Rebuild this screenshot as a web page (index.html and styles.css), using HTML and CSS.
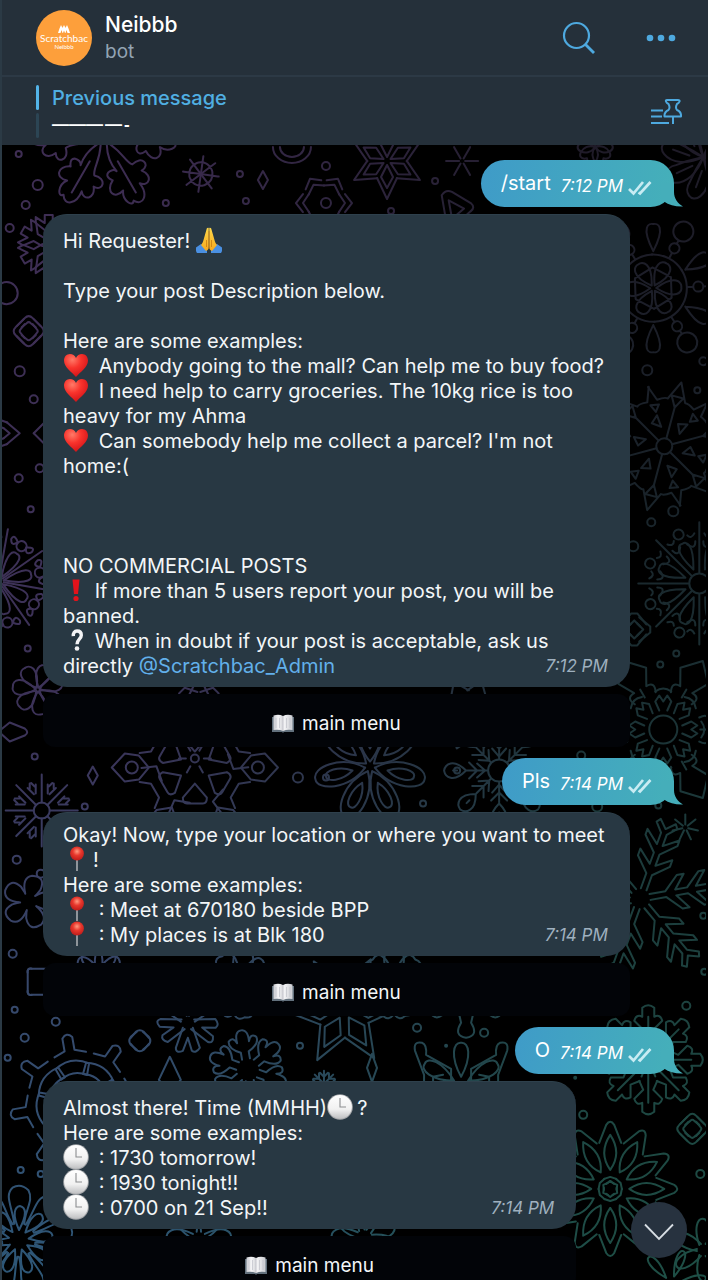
FILE: index.html
```
<!DOCTYPE html>
<html lang="en">
<head>
<meta charset="utf-8">
<meta name="viewport" content="width=device-width, initial-scale=1">
<title>Neibbb</title>
<link rel="stylesheet" href="styles.css">
</head>
<body>
<svg class="sprite" aria-hidden="true">
  <defs>
    <linearGradient id="handFill" x1="0" y1="0" x2="0" y2="1"><stop offset="0" stop-color="#ffd84a"/><stop offset="1" stop-color="#f6a81c"/></linearGradient>
    <radialGradient id="heartFill" cx=".35" cy=".25" r=".8"><stop offset="0" stop-color="#ff7a68"/><stop offset=".45" stop-color="#f8332c"/><stop offset="1" stop-color="#cf1117"/></radialGradient>
    <radialGradient id="pinFill" cx=".5" cy=".35" r=".6"><stop offset="0" stop-color="#ff9a80"/><stop offset=".5" stop-color="#e8372c"/><stop offset="1" stop-color="#c3201d"/></radialGradient>
    <linearGradient id="clockFill" x1="0" y1="0" x2="0" y2="1"><stop offset="0" stop-color="#ffffff"/><stop offset=".6" stop-color="#f1f1f1"/><stop offset="1" stop-color="#bfc0c2"/></linearGradient>
    <linearGradient id="pageFill" x1="0" y1="0" x2="1" y2="0"><stop offset="0" stop-color="#c9cbd0"/><stop offset=".25" stop-color="#f5f5f7"/><stop offset=".48" stop-color="#d7d8dc"/><stop offset=".55" stop-color="#f5f5f7"/><stop offset="1" stop-color="#c9cbd0"/></linearGradient>
  </defs>
  <symbol id="hands" viewBox="0 0 26 26">
    <path d="M0 20.500 5 17 11 22v4H1q-1.500-2-1-5.500zM26 20.500 21 17 15 22v4h10q1.500-2 1-5.500z" fill="#4a90e2"/>
    <path d="M12.700 1c-1.200-.7-2 .3-2.200 1.600L7.500 13c-.4 2-1 3-2.500 5l5 6c2-1 2.700-2 2.700-4zM13.300 1c1.200-.7 2 .3 2.200 1.600l3 10.400c.4 2 1 3 2.500 5l-5 6c-2-1-2.700-2-2.700-4z" fill="url(#handFill)"/>
    <path d="M13 4v18M10.500 13v7M15.500 13v7" stroke="#c97b12" stroke-width=".8" fill="none"/>
  </symbol>
  <symbol id="heart" viewBox="0 0 26 26">
    <path d="M13 25C9 20 1 15.500 1 8.500 1 4.800 3.600 2 7 2c2.700 0 4.900 1.400 6 4 1.100-2.600 3.300-4 6-4 3.400 0 6 2.800 6 6.500C25 15.500 17 20 13 25z" fill="url(#heartFill)"/>
  </symbol>
  <symbol id="bang" viewBox="0 0 26 26">
    <path d="M9.500 2.500h7L15 17h-4z" fill="#e3131b"/><circle cx="13" cy="21.500" r="2.600" fill="#e3131b"/>
  </symbol>
  <symbol id="question" viewBox="0 0 26 26">
    <path d="M10.300 9.200C10 6 11.500 4 14 4c2.600 0 4.300 1.600 4.300 4.200 0 3.800-4.300 4.300-4.300 9" fill="none" stroke="#f3f3f5" stroke-width="3.400"/><circle cx="14" cy="21.500" r="2.300" fill="#f3f3f5"/>
  </symbol>
  <symbol id="pin" viewBox="0 0 26 26">
    <path d="M14 13v12" stroke="#a9adb2" stroke-width="1.600"/><circle cx="14" cy="7.500" r="6.900" fill="url(#pinFill)"/>
  </symbol>
  <symbol id="clock" viewBox="0 0 26 26">
    <circle cx="13" cy="13" r="12.800" fill="#a5a7aa"/><circle cx="13" cy="12.800" r="11.900" fill="url(#clockFill)"/>
    <path d="M13 4v9h6" fill="none" stroke="#8b8d90" stroke-width="1.100"/>
  </symbol>
  <symbol id="book" viewBox="0 0 22 20">
    <path d="M0 3h22v15H12q-1 1.500-2 0H0z" fill="#63717d"/>
    <path d="M1.500 1.500Q7 0 11 2q4-2 9.500-.5V16Q15 15 11 17q-4-2-9.500-1z" fill="url(#pageFill)"/>
    <path d="M11 2v15M4 4v10M7.500 4v10M14.500 4v10M18 4v10" stroke="#b9bbc2" stroke-width=".6"/>
  </symbol>
  <symbol id="ticks" viewBox="0 0 24 16">
    <path d="M1 9 5.500 13.500 15 2M10.500 12.500 12 13.500 22.500 2" fill="none" stroke="currentColor" stroke-width="2.700"/>
  </symbol>
  <symbol id="tail" viewBox="0 0 22 24">
    <path d="M13 0v9c0 7 4 11.500 9 14.500-8 .2-14-1.500-19-5L0 14V0z" fill="currentColor"/>
  </symbol>
</svg>

<div class="app">
  <header class="topbar">
    <div class="avatar" aria-hidden="true">
      <svg class="avatar-mark" viewBox="0 0 12 8"><path d="M0 8 1.500 3.500 3 0l1.500 3L5.500 0 6 2.500 6.500 0l1 3L9 0l1.500 3.500L12 8H9.500L8.500 5l-1 3H7L6 5.500 5 8h-.5l-1-3-1 3z" fill="#fff"/></svg>
      <span class="avatar-name">Scratchbac</span>
      <span class="avatar-sub">Neibbb</span>
    </div>
    <div class="peer">
      <h1 class="peer-name">Neibbb</h1>
      <p class="peer-status">bot</p>
    </div>
    <button class="icon-button" aria-label="Search">
      <svg width="34" height="34" viewBox="0 0 34 34" fill="none" stroke="currentColor" stroke-width="2.200"><circle cx="14.500" cy="14.500" r="12.500"/><path d="M23.500 23.500 32 32" stroke-width="2.800"/></svg>
    </button>
    <button class="icon-button" aria-label="More">
      <svg width="30" height="8" viewBox="0 0 30 8" fill="currentColor"><circle cx="4" cy="4" r="3.300"/><circle cx="15" cy="4" r="3.300"/><circle cx="26" cy="4" r="3.300"/></svg>
    </button>
  </header>

  <section class="pinned" aria-label="Pinned messages">
    <div class="pinned-marks"><i class="mark mark-on"></i><i class="mark"></i></div>
    <div class="pinned-body">
      <a class="pinned-title" href="#first">Previous message</a>
      <p class="pinned-text"><span>———</span><span>—</span><span>-</span></p>
    </div>
    <button class="icon-button" aria-label="Show all pinned messages">
      <svg width="32" height="26" viewBox="0 0 32 26" fill="none" stroke="currentColor" stroke-width="2" stroke-linejoin="round"><path d="M1 11.500h12M1 17.500h11M1 24h18"/><path d="M17 1h11q2 0 1.500 1.500-.5 1.500-2.500 2.500-2 3.500 0 6 4.500 2 4 6.500H14.500q-.5-4.500 4-6.500 2-2.500 0-6-2-1-2.500-2.500Q15.500 1 17 1zM23 17.500V25"/></svg>
    </button>
  </section>

  <main class="chat">
    <svg class="wallpaper" viewBox="0 146 708 1134" preserveAspectRatio="xMidYMin slice" aria-hidden="true">
      <defs>
        <linearGradient id="coolSide" x1="0" y1="0" x2="0" y2="1"><stop offset="0" stop-color="#3e2d53"/><stop offset=".5" stop-color="#3c3258"/><stop offset=".75" stop-color="#36486b"/><stop offset="1" stop-color="#2d5777"/></linearGradient>
        <linearGradient id="tealSide" x1="0" y1="0" x2="0" y2="1"><stop offset="0" stop-color="#1f1b28"/><stop offset=".3" stop-color="#192229"/><stop offset=".6" stop-color="#1c3a3b"/><stop offset="1" stop-color="#1e4f46"/></linearGradient>
        <linearGradient id="fadeRight"><stop offset=".15" stop-color="#000"/><stop offset=".85" stop-color="#fff"/></linearGradient>
        <mask id="rightHalf"><rect y="146" width="708" height="1134" fill="url(#fadeRight)"/></mask>
        <mask id="motifs" maskUnits="userSpaceOnUse" x="0" y="146" width="708" height="1134"><g id="motif-lines" fill="none" stroke="#fff" stroke-width="2" stroke-linejoin="round" stroke-linecap="round"></g></mask>
      </defs>
      <g mask="url(#motifs)">
        <rect y="146" width="708" height="1134" fill="url(#coolSide)"/>
        <rect y="146" width="708" height="1134" fill="url(#tealSide)" mask="url(#rightHalf)"/>
      </g>
    </svg>

    <div class="messages">
      <article class="bubble out">
        <span>/start</span><time class="time">7:12 PM</time><svg class="ticks"><use href="#ticks"/></svg><svg class="tail"><use href="#tail"/></svg>
      </article>

      <div class="group" id="first">
        <article class="bubble in tall">Hi Requester! <svg class="emoji"><use href="#hands"/></svg><br><br>Type your post Description below.<br><br>Here are some examples:<br><svg class="emoji wide"><use href="#heart"/></svg> Anybody going to the mall? Can help me to buy food?<br><svg class="emoji wide"><use href="#heart"/></svg> I need help to carry groceries. The 10kg rice is too heavy for my Ahma<br><svg class="emoji wide"><use href="#heart"/></svg> Can somebody help me collect a parcel? I'm not home:(<br><br><br><br>NO COMMERCIAL POSTS<br><svg class="emoji"><use href="#bang"/></svg> If more than 5 users report your post, you will be banned.<br><svg class="emoji"><use href="#question"/></svg> When in doubt if your post is acceptable, ask us directly <a class="mention" href="#first">@Scratchbac_Admin</a><time class="time">7:12 PM</time></article>
        <button class="menu-button"><svg class="book"><use href="#book"/></svg>main menu</button>
      </div>

      <article class="bubble out">
        <span>Pls</span><time class="time">7:14 PM</time><svg class="ticks"><use href="#ticks"/></svg><svg class="tail"><use href="#tail"/></svg>
      </article>

      <div class="group">
        <article class="bubble in">Okay! Now, type your location or where you want to meet <svg class="emoji wide"><use href="#pin"/></svg>!<br>Here are some examples:<br><svg class="emoji wide"><use href="#pin"/></svg> : Meet at 670180 beside BPP<br><svg class="emoji wide"><use href="#pin"/></svg> : My places is at Blk 180<time class="time">7:14 PM</time></article>
        <button class="menu-button"><svg class="book"><use href="#book"/></svg>main menu</button>
      </div>

      <article class="bubble out">
        <span>O</span><time class="time">7:14 PM</time><svg class="ticks"><use href="#ticks"/></svg><svg class="tail"><use href="#tail"/></svg>
      </article>

      <div class="group narrow">
        <article class="bubble in tall">Almost there! Time (MMHH)<svg class="emoji wide"><use href="#clock"/></svg>?<br>Here are some examples:<br><svg class="emoji wide"><use href="#clock"/></svg> : 1730 tomorrow!<br><svg class="emoji wide"><use href="#clock"/></svg> : 1930 tonight!!<br><svg class="emoji wide"><use href="#clock"/></svg> : 0700 on 21 Sep!!<time class="time">7:14 PM</time></article>
        <button class="menu-button"><svg class="book"><use href="#book"/></svg>main menu</button>
      </div>
    </div>

    <button class="scroll-down" aria-label="Scroll to bottom">
      <svg width="30" height="18" viewBox="0 0 30 18" fill="none" stroke="currentColor" stroke-width="1.800"><path d="M1 1.500 15 16 29 1.500"/></svg>
    </button>
  </main>
</div>
<script src="pattern.js"></script>
</body>
</html>
```
FILE: styles.css
```
* { box-sizing: border-box; }

body {
  margin: 0;
  background: #000;
  color: #f3f6f8;
  font: 20px/25px Inter, "Noto Sans", sans-serif;
}

h1, p { margin: 0; font-weight: 400; }
button { border: 0; padding: 0; background: none; color: inherit; font: inherit; cursor: pointer; }
a { text-decoration: none; }
svg { flex: none; }
.sprite { position: absolute; width: 0; height: 0; }

.app {
  display: flex;
  flex-direction: column;
  height: 100vh;
  overflow: hidden;
  border-left: 2px solid #2b3a45;
}

.topbar {
  display: flex;
  align-items: center;
  padding: 10px 32px 9px 34px;
  background: #25303a;
  border-bottom: 2px solid #2c3945;
}
.avatar {
  display: flex;
  flex: none;
  flex-direction: column;
  align-items: center;
  width: 56px;
  height: 56px;
  padding-top: 15px;
  border-radius: 50%;
  background: #fd9f3b;
  color: #fff;
}
.avatar-mark { width: 12px; height: 8px; }
.avatar-name { font: 10px/11px Lato, sans-serif; }
.avatar-sub { font: 6px/6px Lato, sans-serif; }
.peer { flex: 1; padding-left: 13px; }
.peer-name { font-size: 21px; font-weight: 500; line-height: 28px; color: #fff; }
.peer-status { font-size: 19px; line-height: 26px; color: #93a4b4; }
.icon-button { display: flex; color: #4ea9df; }
.icon-button + .icon-button { margin-left: 50px; }

.pinned {
  display: flex;
  align-items: center;
  padding: 8px 26px 7px 34px;
  background: #25303a;
}
.pinned-marks { display: flex; flex-direction: column; gap: 3px; }
.mark { width: 3px; height: 25px; border-radius: 2px; background: #2c4554; }
.mark-on { background: #53b4e8; }
.pinned-body { flex: 1; padding-left: 13px; }
.pinned-title { display: block; font-weight: 500; line-height: 26px; color: #50afe2; }
.pinned-text {
  display: flex;
  gap: 2px;
  font: bold 17px/27px "Liberation Sans", sans-serif;
  color: #fff;
}

.chat { position: relative; flex: 1; min-height: 0; overflow: hidden; background: #000; }
.wallpaper { position: absolute; inset: 0 0 0 -2px; width: 100%; height: 100%; }

.messages {
  position: relative;
  display: flex;
  flex-direction: column;
  padding: 15px 34px 0 41px;
}

.bubble { position: relative; }
.out {
  display: flex;
  align-items: center;
  align-self: flex-end;
  height: 47px;
  padding: 0 22px 0 20px;
  border-radius: 24px;
  background: linear-gradient(100deg, #3f9bc8, #45b0b9);
  color: #fff;
}
.time { font-size: 17px; font-style: italic; line-height: 24px; }
.out .time { padding: 4px 0 0 10px; }
.ticks { width: 24px; height: 16px; margin: 8px 0 0 5px; color: #c8ecf3; }
.tail { position: absolute; right: -9px; bottom: 0; width: 22px; height: 24px; color: #45aeba; }

.group {
  display: flex;
  flex-direction: column;
  gap: 7px;
  width: 93%;
  padding: 7px 0 11px;
}
.narrow { width: 84.5%; }
.in {
  display: flow-root;
  padding: 10px 20px 8px;
  border: 1px solid #2e404c;
  border-width: 1px 0 0;
  border-radius: 24px;
  background: #283843;
}
.tall { padding-top: 14px; }
.in .time { float: right; margin-right: 2px; color: #9fb0bf; }
.mention { color: #62b0ea; }
.emoji { width: 26px; height: 26px; margin: -6px 0; vertical-align: 1px; }
.wide { margin-right: 4px; }

.menu-button {
  display: flex;
  align-items: center;
  justify-content: center;
  gap: 8px;
  height: 53px;
  padding-top: 6px;
  border-radius: 12px;
  background: #020408;
  font-size: 19px;
}
.book { width: 22px; height: 20px; }

.scroll-down {
  position: absolute;
  right: 21px;
  bottom: 22px;
  display: flex;
  align-items: center;
  justify-content: center;
  width: 56px;
  height: 56px;
  padding-top: 4px;
  border-radius: 50%;
  background: #27323f;
  color: #d7dde3;
}
```
FILE: pattern.js
```
// Winter wallpaper: every motif is one arm, repeated around its centre.
// [x, y, arms, start angle, path of the arm pointing up]
const motifs = [
  [105, 138, 6, 30, 'M0 -6C-9 -22 -6 -32 -11 -38C-24 -34 -27 -48 -16 -48C-24 -58 -14 -66 -8 -58C-10 -72 0 -80 6 -70C10 -76 16 -64 10 -56C22 -60 26 -48 14 -42C22 -32 8 -30 6 -36C8 -26 6 -16 0 -6M0 -28V-64'],
  [202, 175, 8, 8, 'M0 0V-17M-4 -11A12 12 0 0 1 4 -11M0 -17V-18'],
  [388, 162, 6, 0, 'M-10 -17L0 -38L10 -17M0 -4L-6 -16L0 -27L6 -16Z'],
  [463, 162, 6, 30, 'M0 -3V-16'],
  [264, 181, 1, 0, 'M0 -9L5 0L0 9L-5 0Z'],
  [293, 146, 1, 0, 'M-19 2A19 16 0 0 0 19 2M-12 2A12 10 0 0 0 12 2'],
  [325, 204, 6, 30, 'M-9 -21L0 -28L9 -21M-9 -15L0 -21L9 -15'],
  [455, 212, 1, 15, 'M-16 -12Q-14 -19 -7 -18L14 -12Q20 -9 16 -4L4 14Q0 18 -4 14ZM-8 -9L9 -5L0 8Z'],
  [596, 148, 5, 0, 'M0 0C-14 -4 -9 -24 0 -14C9 -24 14 -4 0 0'],
  [704, 158, 8, 10, 'M0 0C-10 -14 -12 -30 -4 -39C4 -48 14 -38 9 -27Q6 -14 0 0M-1 -14L2 -31'],
  [30, 332, 4, 0, 'M-12 -5L-4 -13Q0 -17 4 -13L12 -5M-7 -4L-2 -8Q0 -10 2 -8L7 -4'],
  [50, 246, 6, 0, 'M-4 -5V-15L-13 -22V-28L-4 -22V-30H4V-22L13 -28V-22L4 -15V-5'],
  [2, 434, 3, 90, 'M-11 -6L0 -19L11 -6M-5 -3L0 -9L5 -3'],
  [46, 434, 4, 0, 'M0 -11L11 0'],
  [654, 289, 6, 28, 'M0 -3C-13 -22 -5 -29 0 -28C5 -29 13 -22 0 -3M-17 -29A34 34 0 0 1 17 -29M-10 -18L10 -18M0 -35V-40M0 -40A5 5 0 1 0 0 -50A5 5 0 1 0 0 -40M0 -50V-54M0 -54A10 10 0 1 0 0 -74A10 10 0 1 0 0 -54'],
  [654, 289, 6, 0, 'M0 -37C-13 -62 -4 -65 0 -64C4 -65 13 -62 0 -37'],
  [665, 447, 6, 15, 'M-31 -53L-19 -43Q-12 -48 -9 -47L0 -66L9 -47Q12 -48 19 -43L31 -53M0 -8V-42M-6 -51L0 -40L6 -51ZM-15 -28L-18 -19L-8 -18ZM-24 -36L-17 -31L-16 -39Z'],
  [665, 447, 1, 0, 'M0 -8A8 8 0 1 0 0 8A8 8 0 1 0 0 -8'],
  [700, 584, 8, 0, 'M0 -11V-61M-12 -48Q-8 -44 -5 -50M12 -48Q8 -44 5 -50M-12 -39Q-4 -33 -4 -42M12 -39Q4 -33 4 -42'],
  [700, 584, 8, 22, 'M0 -15C-11 -40 -4 -44 0 -43C4 -44 11 -40 0 -15M0 -48A5 5 0 1 0 0 -58A5 5 0 1 0 0 -48'],
  [700, 584, 1, 0, 'M0 -10A10 10 0 1 0 0 10A10 10 0 1 0 0 -10'],
  [0, 582, 8, 10, 'M0 -5V-53M-12 -42Q-6 -36 -5 -44Q-7 -50 -12 -42M12 -42Q6 -36 5 -44Q7 -50 12 -42'],
  [0, 582, 8, 33, 'M0 -5C-10 -30 -4 -34 0 -33C4 -34 10 -30 0 -5M0 -37A5 5 0 1 0 0 -47A5 5 0 1 0 0 -37'],
  [39, 690, 7, 20, 'M0 -2C-13 -18 -6 -26 0 -25C6 -26 13 -18 0 -2'],
  [14, 732, 1, 0, 'M-14 0L-3 -9L12 -3Q17 1 12 4L-3 10Z'],
  [664, 730, 8, 0, 'M-4 -19L-8 -28L-4 -34L0 -28L4 -34L8 -28L4 -19M-8 -38Q0 -44 8 -38'],
  [664, 730, 6, 30, 'M-12 -36Q-17 -46 -7 -46L-16 -62L0 -79L16 -62L7 -46Q17 -46 12 -36M0 -46V-37'],
  [664, 730, 1, 0, 'M0 -14A14 14 0 1 0 0 14A14 14 0 1 0 0 -14'],
  [635, 630, 4, 0, 'M-12 -5L-3 -16H3L12 -5M-6 -3L0 -9L6 -3'],
  [686, 828, 7, 0, 'M0 -3V-13'],
  [94, 776, 1, 0, 'M0 -9L5 0L0 9L-5 0Z'],
  [43, 811, 8, 0, 'M0 -8V-36M-6 -17V-26M6 -17V-26M-12 -22V-27M12 -22V-27'],
  [43, 811, 1, 0, 'M0 -8A8 8 0 1 0 0 8A8 8 0 1 0 0 -8'],
  [196, 759, 1, 0, 'M0 -4A4 4 0 1 0 0 4A4 4 0 1 0 0 -4'],
  [196, 759, 6, 30, 'M0 -9V-16'],
  [196, 768, 6, 0, 'M-12 -30L0 -16L12 -30Q12 -36 8 -36H-8Q-12 -36 -12 -30M-27 -46L-18 -34L-28 -22M-15 -55L-8 -46L8 -46L15 -55'],
  [196, 768, 6, 30, 'M-12 -56L-14 -70L0 -83L14 -70L12 -56L0 -46ZM0 -57A6 6 0 1 0 0 -69A6 6 0 1 0 0 -57'],
  [371, 767, 7, 0, 'M0 -5C-18 -26 -12 -57 0 -56C12 -57 18 -26 0 -5M0 -18C-8 -30 -6 -46 0 -45C6 -46 8 -30 0 -18'],
  [500, 771, 8, 0, 'M0 -12V-32M-8 -30L0 -22L8 -30M-7 -22L0 -14L7 -22M0 -33C-13 -46 -6 -54 0 -55C6 -54 13 -46 0 -33M0 -42V-46'],
  [500, 771, 1, 0, 'M0 -11A11 11 0 1 0 0 11A11 11 0 1 0 0 -11'],
  [641, 899, 6, 20, 'M-3 -10L-3 -26L-17 -40V-47L-3 -36V-48L-17 -62V-68L-3 -57V-69L-11 -78L-8 -82L0 -74L8 -82L11 -78L3 -69V-57L17 -68V-62L3 -48V-36L17 -47V-40L3 -26V-10'],
  [649, 1060, 8, 0, 'M-9 -21L-5 -30L-14 -39Q-12 -46 -6 -43V-52Q0 -57 6 -52V-43Q12 -46 14 -39L5 -30L9 -21M0 -6V-43'],
  [649, 1060, 8, 22, 'M0 -4V-18'],
  [611, 1189, 12, 0, 'M-11 -46L-4 -64Q0 -70 4 -64L11 -46M0 -19Q-12 -36 0 -54Q12 -36 0 -19'],
  [611, 1189, 6, 0, 'M-6 -10L0 -12L6 -10M-4 -5L0 -8L4 -5'],
  [693, 1129, 4, 0, 'M-12 -5L-4 -13Q0 -17 4 -13L12 -5M-7 -4L-2 -8Q0 -10 2 -8L7 -4'],
  [704, 1250, 6, 0, 'M-4 -5C-16 -40 14 -40 4 -5'],
  [672, 1284, 6, 20, 'M0 -8C-14 -44 14 -44 0 -8'],
  [30, 902, 5, 12, 'M-5 -7Q-12 -22 -2 -26Q12 -28 9 -14L6 -8'],
  [42, 982, 4, 0, 'M-13 -9Q-14 -14 -8 -13L8 -13Q14 -14 13 -9'],
  [80, 1103, 8, -10, 'M-16 -49L-5 -53V-66Q0 -72 5 -66V-53L16 -49M-13 -26L-17 -37Q0 -48 17 -37L13 -26Q0 -34 -13 -26'],
  [141, 1041, 4, 0, 'M-9 -3L-4 -9Q0 -12 4 -9L9 -3'],
  [171, 1076, 1, 0, 'M0 -19L11 4L0 16L-11 4Z'],
  [189, 1023, 5, 36, 'M-5 -5L-12 -25Q-8 -31 -4 -28L0 -15L5 -28Q12 -31 12 -25L5 -5'],
  [249, 1070, 6, -10, 'M-4 -11V-18Q-16 -24 -14 -31Q-9 -36 -6 -28Q-7 -40 0 -40Q7 -40 6 -28Q9 -36 14 -31Q16 -24 4 -18V-11'],
  [345, 1010, 6, 28, 'M-14 -24L0 -57L14 -24M0 -9L-9 -24L0 -42L9 -24Z'],
  [325, 1084, 8, 0, 'M0 0V-13M-4 -11L0 -7L4 -11'],
  [373, 1068, 1, 0, 'M0 -14L5 0L0 14L-5 0Z'],
  [467, 1000, 5, 36, 'M-8 -10L-5 -23Q-13 -36 0 -38Q13 -36 5 -23L8 -10'],
  [462, 1085, 6, 0, 'M0 -8C-11 -28 -8 -43 0 -42C8 -43 11 -28 0 -8'],
  [462, 1085, 1, 0, 'M-37 0V-10L-46 -34Q-48 -44 -39 -42Q-34 -40 -35 -30L-10 -16V0M37 0V-10L46 -34Q48 -44 39 -42Q34 -40 35 -30L10 -16V0M-28 0V-8L-18 -10M28 0V-8L18 -10'],
  [20, 1240, 9, 2, 'M-5 -16C-8 -34 -16 -44 -8 -52Q0 -57 8 -50C14 -40 5 -30 5 -16M0 -10C-8 -26 -5 -33 0 -34C6 -33 8 -26 0 -10'],
  [200, 1240, 6, 30, 'M-6 -6C-16 -26 -8 -34 0 -32C8 -34 16 -26 6 -6'],
  [365, 1238, 7, 10, 'M-6 -6C-16 -26 -8 -34 0 -32C8 -34 16 -26 6 -6'],
  [100, 974, 8, 22, 'M-7 -7C-13 -20 -10 -27 0 -23C10 -27 13 -20 7 -7'],
  [240, 985, 9, 10, 'M-6 -9C-13 -26 -10 -37 0 -33C10 -37 13 -26 6 -9'],
  [395, 985, 9, 0, 'M-6 -9C-13 -26 -10 -37 0 -33C10 -37 13 -26 6 -9'],
  [200, 708, 8, 0, 'M-10 -12L-4 -24H4L10 -12'],
  [470, 715, 8, 20, 'M-10 -22L0 -36L10 -22']
];

// [x, y, radius]
const dots = [
  [20, 155, 3], [39, 186, 5], [27, 206, 4], [11, 229, 4], [167, 204, 3], [247, 202, 3], [241, 175, 3],
  [327, 167, 4], [327, 204, 5], [8, 294, 11], [21, 372, 5], [35, 400, 4], [41, 469, 4], [20, 479, 4],
  [32, 510, 3], [29, 649, 3], [436, 182, 3], [392, 212, 3], [648, 371, 5], [704, 362, 4], [698, 391, 3],
  [674, 512, 5], [652, 523, 4], [634, 547, 5], [677, 654, 3], [661, 665, 3], [36, 757, 3], [86, 807, 3],
  [299, 778, 5], [327, 778, 3], [424, 804, 3], [458, 771, 3], [582, 756, 4], [598, 807, 5], [659, 806, 3],
  [18, 860, 4], [42, 874, 4], [14, 954, 4], [16, 1010, 3], [57, 1022, 4], [26, 1038, 4], [9, 1058, 3],
  [301, 1046, 3], [418, 1028, 4], [485, 1033, 4], [447, 1046, 1], [687, 1006, 4], [704, 916, 3],
  [705, 972, 3], [584, 1115, 4], [576, 1078, 1], [701, 1174, 4], [22, 1170, 3], [42, 1174, 3]
];

let markup = '';
for (const [x, y, arms, start, path] of motifs) {
  for (let i = 0; i < arms; i++) {
    const angle = start + (360 / arms) * i;
    markup += `<path d="${path}" transform="translate(${x} ${y}) rotate(${angle})"/>`;
  }
}
for (const [x, y, r] of dots) markup += `<circle cx="${x}" cy="${y}" r="${r}"/>`;
document.getElementById('motif-lines').innerHTML = markup;
```
